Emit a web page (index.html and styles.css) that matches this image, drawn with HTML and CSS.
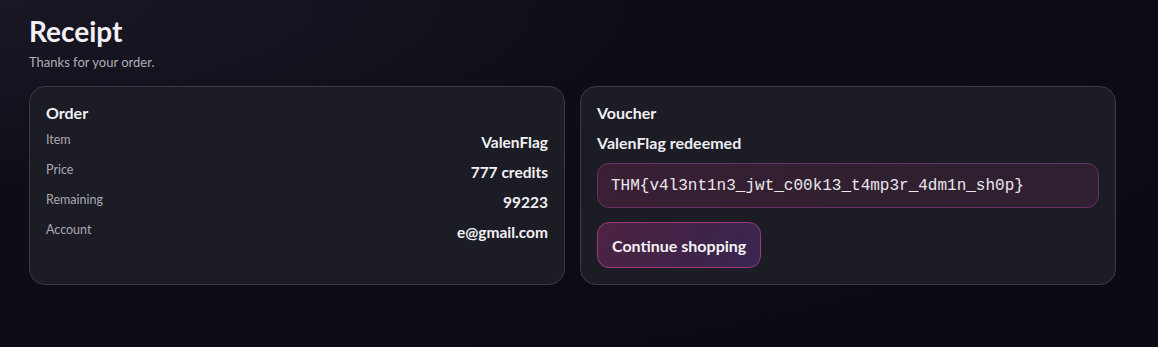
FILE: index.html
```html
<!DOCTYPE html>
<html lang="en">
<head>
<meta charset="utf-8">
<title>Receipt</title>
<link rel="stylesheet" href="styles.css">
</head>
<body>
<main class="page">
  <header class="head">
    <h1 class="title">Receipt</h1>
    <p class="sub">Thanks for your order.</p>
  </header>
  <div class="grid">
    <section class="card">
      <h2 class="card-title">Order</h2>
      <div class="rows">
        <div class="row"><span class="label">Item</span><span class="value">ValenFlag</span></div>
        <div class="row"><span class="label">Price</span><span class="value">777 credits</span></div>
        <div class="row"><span class="label">Remaining</span><span class="value">99223</span></div>
        <div class="row"><span class="label">Account</span><span class="value">e@gmail.com</span></div>
      </div>
    </section>
    <section class="card">
      <h2 class="card-title">Voucher</h2>
      <p class="redeemed">ValenFlag redeemed</p>
      <div class="code">THM{v4l3nt1n3_jwt_c00k13_t4mp3r_4dm1n_sh0p}</div>
      <div><a class="btn" href="#">Continue shopping</a></div>
    </section>
  </div>
</main>
</body>
</html>
```
FILE: styles.css
```css
* { box-sizing: border-box; }
html, body { margin: 0; height: 100%; }
body {
  background: radial-gradient(ellipse at 0% 0%, #1a1724 0%, #0e0d17 40%, #0b0b13 100%);
  color: #ededf2;
  font-family: "Lato", "Noto Sans", sans-serif;
}
.page {
  width: 1087px;
  margin-left: 29px;
  padding-top: 14px;
}
.title {
  margin: 0;
  font-size: 28px;
  font-weight: 700;
  line-height: 34px;
  color: #f1f1f5;
}
.sub {
  margin: 6px 0 0;
  font-size: 13px;
  line-height: 16px;
  color: #aeadb8;
}
.grid {
  display: grid;
  grid-template-columns: 1fr 1fr;
  gap: 15px;
  margin-top: 16px;
}
.card {
  background: #1c1c24;
  border: 1px solid #3a3a44;
  border-radius: 16px;
  padding: 16px;
}
.card-title {
  margin: 0;
  font-size: 16px;
  font-weight: 700;
  line-height: 20px;
  color: #f1f1f5;
}
.rows {
  display: flex;
  flex-direction: column;
  gap: 8px;
  margin-top: 9px;
}
.row {
  display: flex;
  justify-content: space-between;
  align-items: flex-start;
  height: 22px;
}
.label {
  font-size: 12.5px;
  line-height: 16px;
  color: #a9a8b3;
}
.value {
  font-size: 15.5px;
  font-weight: 700;
  line-height: 20px;
  color: #f1f1f5;
}
.redeemed {
  margin: 10px 0 0;
  font-size: 16px;
  font-weight: 700;
  line-height: 20px;
}
.code {
  margin-top: 10px;
  height: 45px;
  display: flex;
  align-items: center;
  padding: 0 13px;
  border: 1px solid #6a3060;
  border-radius: 12px;
  background: linear-gradient(90deg, #3a1f35 0%, #30202f 50%, #2e2032 100%);
  font-family: "Liberation Mono", "DejaVu Sans Mono", monospace;
  font-size: 16px;
  color: #ebe6ee;
}
.btn {
  display: inline-flex;
  align-items: center;
  margin-top: 14px;
  height: 46px;
  padding: 0 14px;
  border: 1px solid #9c3a7c;
  border-radius: 12px;
  background: linear-gradient(120deg, #4d2242 0%, #3f2448 60%, #392652 100%);
  color: #f3f1f5;
  font-size: 16px;
  font-weight: 700;
  text-decoration: none;
}
```
